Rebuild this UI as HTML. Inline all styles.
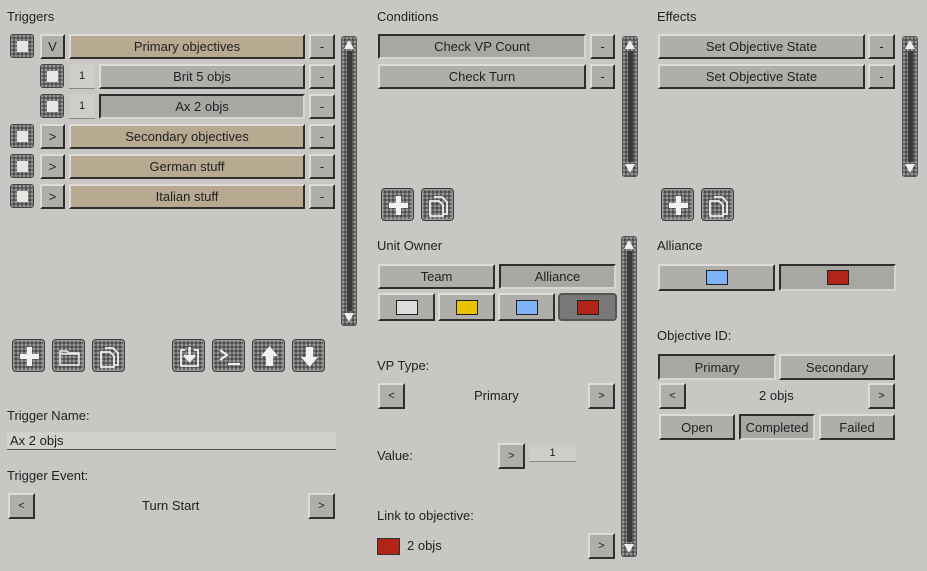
<!DOCTYPE html>
<html><head><style>
*{box-sizing:border-box;margin:0;padding:0}
body{width:927px;height:571px;background:#c9c7c4;font-family:"Liberation Sans",sans-serif;font-size:13px;color:#1e1e1e;position:relative;overflow:hidden}
.a{position:absolute}
.l{position:absolute;font-size:13px;color:#222}
.b{position:absolute;background:#b0aeab;border:2px solid;border-color:#dedcd9 #2e2e2e #2e2e2e #dedcd9;display:flex;align-items:center;justify-content:center;font-size:13px;color:#222}
.p{border-color:#2e2e2e #d8d6d3 #d8d6d3 #2e2e2e;background:#a9a7a4}
.t{background:#b7aa91}
.n{position:absolute;background:#cfcdca;border-bottom:1px solid #888;display:flex;align-items:center;justify-content:center;font-size:11px}
.tx{background-color:#6a6a6a;background-image:radial-gradient(circle at 1px 1px,#9a9a9a 1px,transparent 1.3px),radial-gradient(circle at 3px 3px,#4a4a4a 1px,transparent 1.3px);background-size:4px 4px,4px 4px}
.cb{position:absolute;width:24px;height:24px;border-radius:3px;border:1px solid #444}
.cb::after{content:"";position:absolute;left:6px;top:6px;width:11px;height:11px;background:#e8e6e3}
.ic{position:absolute;width:33px;height:33px;border-radius:4px;border:1px solid #3a3a3a;box-shadow:inset 0 0 0 1px #999}
.ic svg{position:absolute;left:0;top:0}
.sb{position:absolute;width:16px;border-radius:3px;border:1px solid #555}
.sb::before{content:"";position:absolute;left:5px;top:14px;bottom:14px;width:5px;background:#3a3a3a}
.sb .u,.sb .d{position:absolute;left:2px;width:0;height:0;border-left:5px solid transparent;border-right:5px solid transparent}
.sb .u{top:3px;border-bottom:9px solid #eee}
.sb .d{bottom:3px;border-top:9px solid #eee}
.sw{width:22px;height:15px;border:1px solid #222}
</style></head><body>
<div class="l" style="left:7px;top:9px">Triggers</div>
<div class="cb tx" style="left:10px;top:34px"></div><div class="b" style="left:40px;top:34px;width:25px;height:25px">V</div><div class="b t" style="left:69px;top:34px;width:236px;height:25px">Primary objectives</div><div class="b" style="left:309px;top:34px;width:26px;height:25px">-</div>
<div class="cb tx" style="left:40px;top:64px"></div><div class="n" style="left:69px;top:64px;width:26px;height:25px">1</div><div class="b" style="left:99px;top:64px;width:206px;height:25px">Brit 5 objs</div><div class="b" style="left:309px;top:64px;width:26px;height:25px">-</div>
<div class="cb tx" style="left:40px;top:94px"></div><div class="n" style="left:69px;top:94px;width:26px;height:25px">1</div><div class="b p" style="left:99px;top:94px;width:206px;height:25px">Ax 2 objs</div><div class="b" style="left:309px;top:94px;width:26px;height:25px">-</div>
<div class="cb tx" style="left:10px;top:124px"></div><div class="b" style="left:40px;top:124px;width:25px;height:25px">&gt;</div><div class="b t" style="left:69px;top:124px;width:236px;height:25px">Secondary objectives</div><div class="b" style="left:309px;top:124px;width:26px;height:25px">-</div>
<div class="cb tx" style="left:10px;top:154px"></div><div class="b" style="left:40px;top:154px;width:25px;height:25px">&gt;</div><div class="b t" style="left:69px;top:154px;width:236px;height:25px">German stuff</div><div class="b" style="left:309px;top:154px;width:26px;height:25px">-</div>
<div class="cb tx" style="left:10px;top:184px"></div><div class="b" style="left:40px;top:184px;width:25px;height:25px">&gt;</div><div class="b t" style="left:69px;top:184px;width:236px;height:25px">Italian stuff</div><div class="b" style="left:309px;top:184px;width:26px;height:25px">-</div>
<div class="sb tx" style="left:341px;top:36px;height:290px"><div class="u"></div><div class="d"></div></div>

<div class="ic tx" style="left:12px;top:339px"><svg width="33" height="33"><path d="M16.5 7v19M7 16.5h19" stroke="#f2f2f2" stroke-width="5"/></svg></div>
<div class="ic tx" style="left:52px;top:339px"><svg width="33" height="33" fill="none" stroke="#eee" stroke-width="1.5"><path d="M7 11h7l2 2h10v12H7z M7 14h19"/></svg></div>
<div class="ic tx" style="left:92px;top:339px"><svg width="33" height="33" fill="none" stroke="#eee" stroke-width="1.8"><path d="M12 8h8l5 5v12h-3 M8 12h9l4 4v11H8z"/></svg></div>
<div class="ic tx" style="left:172px;top:339px"><svg width="33" height="33" fill="none" stroke="#eee" stroke-width="1.8"><path d="M12 10H8v16h17V10h-4"/><path d="M16.5 7v12M11 15l5.5 6 5.5-6" fill="#eee" stroke-width="2.5"/></svg></div>
<div class="ic tx" style="left:212px;top:339px"><svg width="33" height="33" fill="none" stroke="#eee" stroke-width="2"><path d="M7 10l7 5-7 5M15 24h12"/></svg></div>
<div class="ic tx" style="left:252px;top:339px"><svg width="33" height="33"><path d="M16.5 6L8 16h5v10h7V16h5z" fill="#f2f2f2"/></svg></div>
<div class="ic tx" style="left:292px;top:339px"><svg width="33" height="33"><path d="M16.5 27L8 17h5V7h7v10h5z" fill="#f2f2f2"/></svg></div>

<div class="l" style="left:7px;top:408px">Trigger Name:</div>
<div class="a" style="left:7px;top:432px;width:329px;height:18px;background:#d2d0cd;border-bottom:1px solid #555;padding-left:3px;font-size:13px;line-height:17px">Ax 2 objs</div>
<div class="l" style="left:7px;top:468px">Trigger Event:</div>
<div class="b" style="left:8px;top:493px;width:27px;height:26px;font-size:11px">&lt;</div>
<div class="l" style="left:142px;top:498px">Turn Start</div>
<div class="b" style="left:308px;top:493px;width:27px;height:26px;font-size:11px">&gt;</div>

<div class="l" style="left:377px;top:9px">Conditions</div>
<div class="b p" style="left:378px;top:34px;width:208px;height:25px">Check VP Count</div><div class="b" style="left:590px;top:34px;width:25px;height:25px">-</div>
<div class="b" style="left:378px;top:64px;width:208px;height:25px">Check Turn</div><div class="b" style="left:590px;top:64px;width:25px;height:25px">-</div>
<div class="sb tx" style="left:622px;top:36px;height:141px"><div class="u"></div><div class="d"></div></div>
<div class="ic tx" style="left:381px;top:188px"><svg width="33" height="33"><path d="M16.5 7v19M7 16.5h19" stroke="#f2f2f2" stroke-width="5"/></svg></div>
<div class="ic tx" style="left:421px;top:188px"><svg width="33" height="33" fill="none" stroke="#eee" stroke-width="1.8"><path d="M12 8h8l5 5v12h-3 M8 12h9l4 4v11H8z"/></svg></div>
<div class="l" style="left:377px;top:238px">Unit Owner</div>
<div class="b" style="left:378px;top:264px;width:117px;height:25px">Team</div>
<div class="b p" style="left:499px;top:264px;width:117px;height:25px">Alliance</div>
<div class="b" style="left:378px;top:293px;width:57px;height:28px"><div class="sw" style="background:#dcdcdc"></div></div>
<div class="b" style="left:438px;top:293px;width:57px;height:28px"><div class="sw" style="background:#e8c400"></div></div>
<div class="b" style="left:498px;top:293px;width:57px;height:28px"><div class="sw" style="background:#7fb3f5"></div></div>
<div class="b" style="left:558px;top:293px;width:59px;height:28px;background:#7a7977;border-radius:4px;border-color:#555"><div class="sw" style="background:#b32418"></div></div>
<div class="sb tx" style="left:621px;top:236px;height:321px"><div class="u"></div><div class="d"></div></div>
<div class="l" style="left:377px;top:358px">VP Type:</div>
<div class="b" style="left:378px;top:383px;width:27px;height:26px;font-size:11px">&lt;</div>
<div class="l" style="left:474px;top:388px">Primary</div>
<div class="b" style="left:588px;top:383px;width:27px;height:26px;font-size:11px">&gt;</div>
<div class="l" style="left:377px;top:448px">Value:</div>
<div class="b" style="left:498px;top:443px;width:27px;height:26px;font-size:11px">&gt;</div>
<div class="n" style="left:529px;top:445px;width:47px;height:17px">1</div>
<div class="l" style="left:377px;top:508px">Link to objective:</div>
<div class="a" style="left:377px;top:538px;width:23px;height:17px;background:#b32418;border:1px solid #333"></div>
<div class="l" style="left:407px;top:538px">2 objs</div>
<div class="b" style="left:588px;top:533px;width:27px;height:26px;font-size:11px">&gt;</div>

<div class="l" style="left:657px;top:9px">Effects</div>
<div class="b" style="left:658px;top:34px;width:207px;height:25px">Set Objective State</div><div class="b" style="left:868px;top:34px;width:27px;height:25px">-</div>
<div class="b" style="left:658px;top:64px;width:207px;height:25px">Set Objective State</div><div class="b" style="left:868px;top:64px;width:27px;height:25px">-</div>
<div class="sb tx" style="left:902px;top:36px;height:141px"><div class="u"></div><div class="d"></div></div>
<div class="ic tx" style="left:661px;top:188px"><svg width="33" height="33"><path d="M16.5 7v19M7 16.5h19" stroke="#f2f2f2" stroke-width="5"/></svg></div>
<div class="ic tx" style="left:701px;top:188px"><svg width="33" height="33" fill="none" stroke="#eee" stroke-width="1.8"><path d="M12 8h8l5 5v12h-3 M8 12h9l4 4v11H8z"/></svg></div>
<div class="l" style="left:657px;top:238px">Alliance</div>
<div class="b" style="left:658px;top:264px;width:117px;height:27px"><div class="sw" style="background:#7fb3f5"></div></div>
<div class="b p" style="left:779px;top:264px;width:117px;height:27px"><div class="sw" style="background:#b32418"></div></div>
<div class="l" style="left:657px;top:328px">Objective ID:</div>
<div class="b p" style="left:658px;top:354px;width:118px;height:26px">Primary</div>
<div class="b" style="left:779px;top:354px;width:116px;height:26px">Secondary</div>
<div class="b" style="left:659px;top:383px;width:27px;height:26px;font-size:11px">&lt;</div>
<div class="l" style="left:759px;top:388px">2 objs</div>
<div class="b" style="left:868px;top:383px;width:27px;height:26px;font-size:11px">&gt;</div>
<div class="b" style="left:659px;top:414px;width:76px;height:26px">Open</div>
<div class="b p" style="left:739px;top:414px;width:76px;height:26px">Completed</div>
<div class="b" style="left:819px;top:414px;width:76px;height:26px">Failed</div>
</body></html>
